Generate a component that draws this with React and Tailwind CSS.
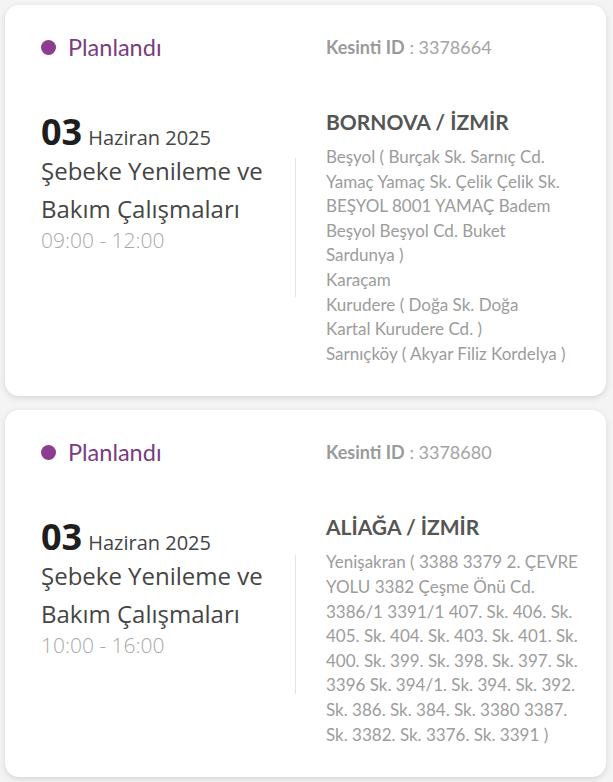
const outages = [
  {
    id: '3378664',
    day: '03',
    month: 'Haziran 2025',
    title: ['Şebeke Yenileme ve', 'Bakım Çalışmaları'],
    time: '09:00 - 12:00',
    place: 'BORNOVA / İZMİR',
    dividerClass: 'mt-[50px]',
    streets: [
      ['Beşyol ( Burçak Sk. Sarnıç Cd.', 'Yamaç Yamaç Sk. Çelik Çelik Sk.', 'BEŞYOL 8001 YAMAÇ Badem', 'Beşyol Beşyol Cd. Buket', 'Sardunya )'],
      ['Karaçam'],
      ['Kurudere ( Doğa Sk. Doğa', 'Kartal Kurudere Cd. )'],
      ['Sarnıçköy ( Akyar Filiz Kordelya )'],
    ],
  },
  {
    id: '3378680',
    day: '03',
    month: 'Haziran 2025',
    title: ['Şebeke Yenileme ve', 'Bakım Çalışmaları'],
    time: '10:00 - 16:00',
    place: 'ALİAĞA / İZMİR',
    dividerClass: 'mt-[42px]',
    streets: [
      [
        'Yenişakran ( 3388 3379 2. ÇEVRE',
        'YOLU 3382 Çeşme Önü Cd.',
        '3386/1 3391/1 407. Sk. 406. Sk.',
        '405. Sk. 404. Sk. 403. Sk. 401. Sk.',
        '400. Sk. 399. Sk. 398. Sk. 397. Sk.',
        '3396 Sk. 394/1. Sk. 394. Sk. 392.',
        'Sk. 386. Sk. 384. Sk. 3380 3387.',
        'Sk. 3382. Sk. 3376. Sk. 3391 )',
      ],
    ],
  },
];

function OutageCard({ item }) {
  return (
    <div className="rounded-[14px] bg-white pl-9 pr-6 pt-7 pb-[30px] shadow-[0_2px_6px_rgba(0,0,0,0.13)]">
      <div className="flex items-center">
        <div className="flex w-[285px] items-center gap-[12px]">
          <span className="h-[15px] w-[15px] rounded-full bg-[#8c3d90]" />
          <span className="font-['Lato'] text-[23.5px] leading-7 text-[#7a3c7e]">Planlandı</span>
        </div>
        <div className="font-['Lato'] text-[18px] leading-7 text-[#a3a3a3]">
          <span className="font-bold text-[#9a9a9a]">Kesinti ID</span> : {item.id}
        </div>
      </div>

      <div className="mt-[47px] flex items-start">
        <div className="w-[254px] pt-[4px] font-['Open_Sans']">
          <div className="flex items-baseline gap-[6px] leading-[40px]">
            <span className="text-[36px] font-bold text-[#1e1e1e]">{item.day}</span>
            <span className="text-[20px] text-[#454545]">{item.month}</span>
          </div>
          <div className="-mt-[6px] text-[24px] leading-[38px] text-[#454545]">
            {item.title.map((t) => (
              <div key={t}>{t}</div>
            ))}
          </div>
          <div className="text-[21px] font-light leading-[25px] text-[#a8a8a8]">{item.time}</div>
        </div>

        <div className={`${item.dividerClass} h-[139px] w-px bg-[#e3e3e3]`} />

        <div className="ml-[30px] font-['Lato']">
          <div className="text-[21px] font-bold leading-7 text-[#555555]">{item.place}</div>
          <div className="mt-[9px] text-[17px] leading-[24.6px] text-[#9c9c9c]">
            {item.streets.map((lines, i) => (
              <div key={i} className="whitespace-nowrap">
                {lines.map((l) => (
                  <div key={l}>{l}</div>
                ))}
              </div>
            ))}
          </div>
        </div>
      </div>
    </div>
  );
}

export default function App() {
  return (
    <div className="min-h-screen bg-[#f4f4f4] pt-[5px] pl-[5px] pr-[7px] pb-[6px]">
      <div className="flex flex-col gap-[14px]">
        {outages.map((o) => (
          <OutageCard key={o.id} item={o} />
        ))}
      </div>
    </div>
  );
}
